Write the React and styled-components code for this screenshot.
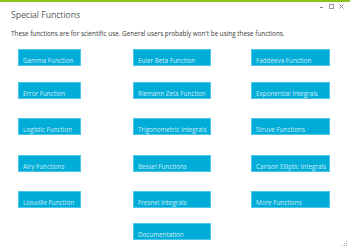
import styled, { createGlobalStyle } from "styled-components";

// Global
const GlobalStyle = createGlobalStyle`
  html, body {
    margin: 0;
    padding: 0;
    background: #ffffff;
  }
  body {
    font-family: "Open Sans", "Noto Sans", sans-serif;
  }
`;

// Data
const columns = [
  {
    width: 63,
    items: ["Gamma Function", "Error Function", "Logistic Function", "Airy Functions", "Liouville Function"],
  },
  {
    width: 78,
    items: [
      "Euler Beta Function",
      "Riemann Zeta Function",
      "Trigonometric Integrals",
      "Bessel Functions",
      "Fresnel Integrals",
      "Documentation",
    ],
  },
  {
    width: 79,
    items: [
      "Faddeeva Function",
      "Exponential Integrals",
      "Struve Functions",
      "Carlson Elliptic Integrals",
      "More Functions",
    ],
  },
];

// Style
const Window = styled.div`
  position: relative;
  width: 350px;
  height: 249px;
  overflow: hidden;
  background: #fff;
  border-top: 2px solid #8cc21e;
  box-sizing: border-box;
`;

const Header = styled.header`
  display: flex;
  justify-content: space-between;
  align-items: flex-start;
  padding: 0 6px 0 11px;
`;

const Title = styled.h1`
  margin: 7px 0 0;
  font-size: 8.6px;
  line-height: 12px;
  font-weight: 400;
  color: #555;
`;

const Controls = styled.div`
  display: flex;
  gap: 5px;
  margin-top: 2px;
`;

const Intro = styled.p`
  margin: 9px 0 0 11px;
  font-size: 6.35px;
  line-height: 8px;
  color: #3a3a3a;
`;

const Grid = styled.div`
  display: grid;
  grid-template-columns: 115px 118px 79px;
  grid-template-rows: 33px 36px 37px 36px 32px 17px;
  margin: 11px 0 0 18px;
`;

const Column = styled.div`
  display: contents;
`;

const Tile = styled.button`
  grid-column: ${(p) => p.$col};
  grid-row: ${(p) => p.$row};
  width: ${(p) => p.$width}px;
  height: 17px;
  margin: 0;
  padding: 0 0 1px 4px;
  display: flex;
  align-items: flex-end;
  background: #00acd8;
  border: 1px solid #4cc7e8;
  box-sizing: border-box;
  color: rgba(255, 255, 255, 0.82);
  font-family: "Open Sans", "Noto Sans", sans-serif;
  font-size: 6.3px;
  line-height: 6px;
  white-space: nowrap;
  cursor: pointer;
`;

const Grip = styled.svg`
  position: absolute;
  right: 3px;
  bottom: 3px;
`;

// JSX
const App = () => {
  return (
    <>
      <GlobalStyle />
      <Window>
        <Header>
          <Title>Special Functions</Title>
          <Controls>
            <svg width="5" height="5" viewBox="0 0 5 5">
              <rect x="1" y="3" width="3" height="1" fill="#888" />
            </svg>
            <svg width="5" height="5" viewBox="0 0 5 5">
              <rect x="0.5" y="0.5" width="4" height="4" fill="none" stroke="#999" />
            </svg>
            <svg width="5" height="5" viewBox="0 0 5 5">
              <path d="M0.5 0.5 L4.5 4.5 M4.5 0.5 L0.5 4.5" stroke="#888" strokeWidth="1" />
            </svg>
          </Controls>
        </Header>
        <Intro>These functions are for scientific use. General users probably won't be using these functions.</Intro>
        <Grid>
          {columns.map((col, c) => (
            <Column key={c}>
              {col.items.map((label, r) => (
                <Tile key={label} $col={c + 1} $row={r + 1} $width={col.width}>
                  {label}
                </Tile>
              ))}
            </Column>
          ))}
        </Grid>
        <Grip width="5" height="5" viewBox="0 0 5 5">
          <rect x="4" y="0" width="1" height="1" fill="#aaa" />
          <rect x="2" y="2" width="1" height="1" fill="#aaa" />
          <rect x="4" y="2" width="1" height="1" fill="#aaa" />
          <rect x="0" y="4" width="1" height="1" fill="#aaa" />
          <rect x="2" y="4" width="1" height="1" fill="#aaa" />
          <rect x="4" y="4" width="1" height="1" fill="#aaa" />
        </Grip>
      </Window>
    </>
  );
};

export default App;
